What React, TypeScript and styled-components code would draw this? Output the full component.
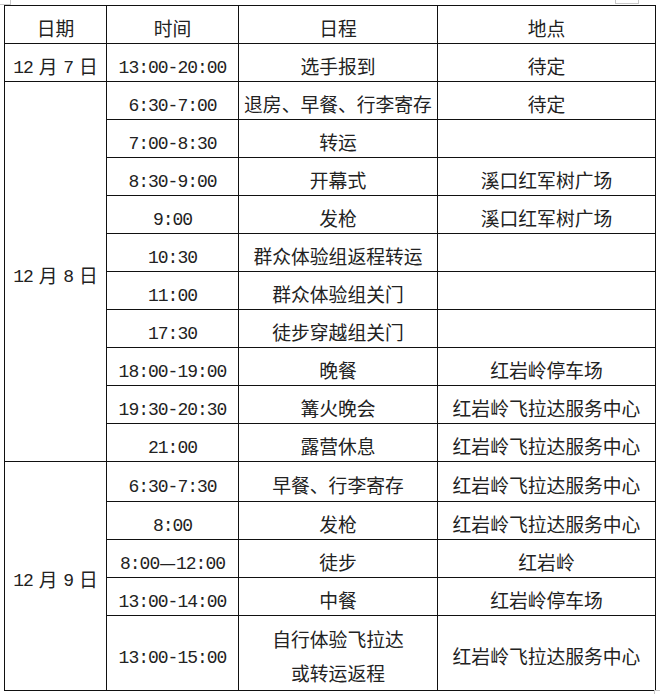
import React from 'react';
import styled, { createGlobalStyle } from 'styled-components';

const GlobalStyle = createGlobalStyle`
  html, body {
    margin: 0;
    padding: 0;
    background: #fff;
  }
  body {
    font-family: "Noto Sans CJK SC", "Liberation Sans", sans-serif;
    color: #222;
  }
`;

type Entry = {
  date?: string;
  span?: number;
  time: string;
  event: string | string[];
  place: string;
  h?: number;
};

const schedule: Entry[] = [
  { date: '12 月 7 日', span: 1, time: '13:00-20:00', event: '选手报到', place: '待定' },
  { date: '12 月 8 日', span: 10, time: '6:30-7:00', event: '退房、早餐、行李寄存', place: '待定' },
  { time: '7:00-8:30', event: '转运', place: '' },
  { time: '8:30-9:00', event: '开幕式', place: '溪口红军树广场' },
  { time: '9:00', event: '发枪', place: '溪口红军树广场' },
  { time: '10:30', event: '群众体验组返程转运', place: '' },
  { time: '11:00', event: '群众体验组关门', place: '' },
  { time: '17:30', event: '徒步穿越组关门', place: '' },
  { time: '18:00-19:00', event: '晚餐', place: '红岩岭停车场' },
  { time: '19:30-20:30', event: '篝火晚会', place: '红岩岭飞拉达服务中心' },
  { time: '21:00', event: '露营休息', place: '红岩岭飞拉达服务中心' },
  { date: '12 月 9 日', span: 5, time: '6:30-7:30', event: '早餐、行李寄存', place: '红岩岭飞拉达服务中心', h: 40 },
  { time: '8:00', event: '发枪', place: '红岩岭飞拉达服务中心' },
  { time: '8:00—12:00', event: '徒步', place: '红岩岭' },
  { time: '13:00-14:00', event: '中餐', place: '红岩岭停车场' },
  { time: '13:00-15:00', event: ['自行体验飞拉达', '或转运返程'], place: '红岩岭飞拉达服务中心', h: 75 },
];

const Page = styled.div`
  position: relative;
  padding: 5px 0 0 4px;
  height: 694px;
  box-sizing: border-box;
  overflow: hidden;
`;

const Table = styled.table`
  border-collapse: collapse;
  table-layout: fixed;
  width: 652px;
`;

const Row = styled.tr<{ $h: number }>`
  height: ${(p) => p.$h}px;
`;

const Cell = styled.td`
  border: 1px solid #111;
  padding: 6px 0 0;
  text-align: center;
  vertical-align: middle;
  font-size: 18.8px;
  line-height: 28px;
  white-space: nowrap;
  color: #222;
`;

const HeadCell = styled(Cell).attrs({ as: 'th' })`
  font-weight: 400;
`;

const Num = styled.span`
  font-family: "Liberation Mono", monospace;
  font-size: 18px;
  line-height: 1;
  letter-spacing: -1px;
  word-spacing: -4px;
  vertical-align: 1px;
`;

const Line = styled.div`
  line-height: 34px;
`;

const CornerMark = styled.div<{ $top?: number; $left?: number; $w: number; $h: number }>`
  position: absolute;
  top: ${(p) => p.$top ?? 0}px;
  left: ${(p) => p.$left ?? 0}px;
  width: ${(p) => p.$w}px;
  height: ${(p) => p.$h}px;
  border: 1px solid #c8c8c8;
  box-sizing: border-box;
  pointer-events: none;
`;

function rich(text: string) {
  return text.split(/([\x20-\x7e]+)/).map((part, i) =>
    /^[\x20-\x7e]+$/.test(part) ? <Num key={i}>{part}</Num> : part
  );
}

export default function App() {
  return (
    <Page>
      <GlobalStyle />
      <CornerMark $top={-6} $left={-2} $w={13} $h={11} />
      <CornerMark $top={-8} $left={615} $w={24} $h={12} />
      <CornerMark $top={690} $left={654} $w={10} $h={8} />
      <Table>
        <colgroup>
          <col style={{ width: 102 }} />
          <col style={{ width: 132 }} />
          <col style={{ width: 199 }} />
          <col style={{ width: 218 }} />
        </colgroup>
        <thead>
          <Row $h={38}>
            <HeadCell>日期</HeadCell>
            <HeadCell>时间</HeadCell>
            <HeadCell>日程</HeadCell>
            <HeadCell>地点</HeadCell>
          </Row>
        </thead>
        <tbody>
          {schedule.map((e, i) => (
            <Row key={i} $h={e.h ?? 38}>
              {e.date && <Cell rowSpan={e.span}>{rich(e.date)}</Cell>}
              <Cell>{rich(e.time)}</Cell>
              <Cell>
                {Array.isArray(e.event)
                  ? e.event.map((l, j) => <Line key={j}>{rich(l)}</Line>)
                  : rich(e.event)}
              </Cell>
              <Cell>{rich(e.place)}</Cell>
            </Row>
          ))}
        </tbody>
      </Table>
    </Page>
  );
}
